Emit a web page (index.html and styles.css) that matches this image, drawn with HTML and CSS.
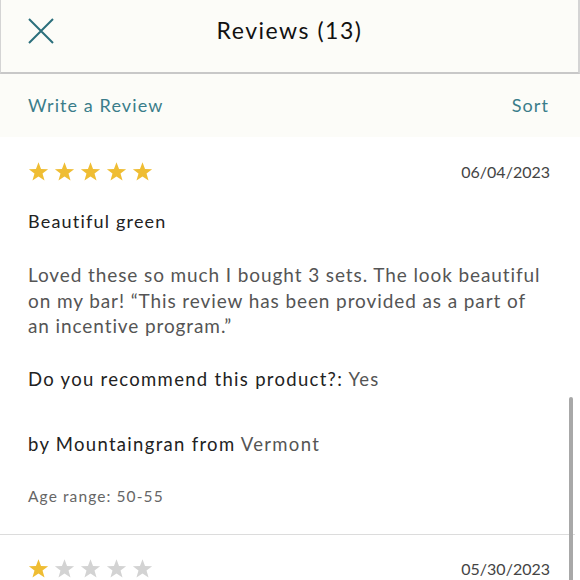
FILE: index.html
```html
<!DOCTYPE html>
<html lang="en">
<head>
  <meta charset="UTF-8">
  <title>Reviews (13)</title>
  <meta name="viewport" content="width=device-width, initial-scale=1">
  <link rel="stylesheet" href="styles.css">
</head>
<body>
  <div class="sheet">
    <header class="top-bar">
      <button class="close-btn" aria-label="Close">
        <svg width="26" height="26" viewBox="0 0 26 26"><path d="M1 1 L25 25 M25 1 L1 25" stroke="#2b6f7c" stroke-width="2" fill="none"/></svg>
      </button>
      <h1>Reviews (13)</h1>
    </header>

    <div class="toolbar">
      <a href="#" class="link">Write a Review</a>
      <a href="#" class="link">Sort</a>
    </div>

    <div class="review">
      <div class="review-top">
        <div class="stars">
          <svg viewBox="0 0 24 24"><polygon class="on" points="12,1.5 14.9,9.2 23,9.4 16.6,14.4 18.9,22.3 12,17.7 5.1,22.3 7.4,14.4 1,9.4 9.1,9.2"/></svg>
          <svg viewBox="0 0 24 24"><polygon class="on" points="12,1.5 14.9,9.2 23,9.4 16.6,14.4 18.9,22.3 12,17.7 5.1,22.3 7.4,14.4 1,9.4 9.1,9.2"/></svg>
          <svg viewBox="0 0 24 24"><polygon class="on" points="12,1.5 14.9,9.2 23,9.4 16.6,14.4 18.9,22.3 12,17.7 5.1,22.3 7.4,14.4 1,9.4 9.1,9.2"/></svg>
          <svg viewBox="0 0 24 24"><polygon class="on" points="12,1.5 14.9,9.2 23,9.4 16.6,14.4 18.9,22.3 12,17.7 5.1,22.3 7.4,14.4 1,9.4 9.1,9.2"/></svg>
          <svg viewBox="0 0 24 24"><polygon class="on" points="12,1.5 14.9,9.2 23,9.4 16.6,14.4 18.9,22.3 12,17.7 5.1,22.3 7.4,14.4 1,9.4 9.1,9.2"/></svg>
        </div>
        <span class="date">06/04/2023</span>
      </div>
      <h2 class="review-title">Beautiful green</h2>
      <p class="review-body">Loved these so much I bought 3 sets. The look beautiful on my bar! “This review has been provided as a part of an incentive program.”</p>
      <p class="recommend">Do you recommend this product?: <span class="light">Yes</span></p>
      <p class="author">by Mountaingran from <span class="light">Vermont</span></p>
      <p class="age">Age range: 50-55</p>
    </div>

    <div class="review">
      <div class="review-top">
        <div class="stars">
          <svg viewBox="0 0 24 24"><polygon class="on" points="12,1.5 14.9,9.2 23,9.4 16.6,14.4 18.9,22.3 12,17.7 5.1,22.3 7.4,14.4 1,9.4 9.1,9.2"/></svg>
          <svg viewBox="0 0 24 24"><polygon points="12,1.5 14.9,9.2 23,9.4 16.6,14.4 18.9,22.3 12,17.7 5.1,22.3 7.4,14.4 1,9.4 9.1,9.2"/></svg>
          <svg viewBox="0 0 24 24"><polygon points="12,1.5 14.9,9.2 23,9.4 16.6,14.4 18.9,22.3 12,17.7 5.1,22.3 7.4,14.4 1,9.4 9.1,9.2"/></svg>
          <svg viewBox="0 0 24 24"><polygon points="12,1.5 14.9,9.2 23,9.4 16.6,14.4 18.9,22.3 12,17.7 5.1,22.3 7.4,14.4 1,9.4 9.1,9.2"/></svg>
          <svg viewBox="0 0 24 24"><polygon points="12,1.5 14.9,9.2 23,9.4 16.6,14.4 18.9,22.3 12,17.7 5.1,22.3 7.4,14.4 1,9.4 9.1,9.2"/></svg>
        </div>
        <span class="date">05/30/2023</span>
      </div>
    </div>

    <div class="scrollbar"></div>
  </div>
</body>
</html>
```

FILE: styles.css
```css
body {
  margin: 0;
  font-family: Lato, "Noto Sans", sans-serif;
  background: #fff;
  color: #333;
}

.sheet {
  position: relative;
  height: 580px;
  overflow: hidden;
}

.top-bar {
  height: 74px;
  box-sizing: border-box;
  padding-top: 15px;
  background: #fcfcf8;
  border-left: 1px solid #d4d4d4;
  border-right: 2px solid #d4d4d4;
  border-bottom: 2px solid #c8c8c8;
  display: flex;
  align-items: flex-start;
  justify-content: center;
  position: relative;
}

.top-bar h1 {
  margin: 0;
  font-size: 23px;
  line-height: 30px;
  font-weight: 400;
  letter-spacing: 1.5px;
  color: #111;
}

.close-btn {
  position: absolute;
  left: 27px;
  top: 18px;
  background: none;
  border: none;
  padding: 0;
  width: 26px;
  height: 26px;
}

.close-btn svg {
  display: block;
}

.toolbar {
  height: 63px;
  background: #fcfcf8;
  display: flex;
  align-items: center;
  justify-content: space-between;
  padding: 0 31px 0 28px;
}

.link {
  color: #3a7d8a;
  text-decoration: none;
  font-size: 18px;
  letter-spacing: 1.1px;
  padding-bottom: 2px;
}

.review {
  padding: 24px 25px 28px 28px;
  border-bottom: 1px solid #dcdcdc;
  margin-right: 5px;
}

.review-top {
  display: flex;
  justify-content: space-between;
  align-items: center;
  height: 20px;
}

.stars {
  display: flex;
  gap: 5px;
}

.stars svg {
  width: 21px;
  height: 21px;
  display: block;
}

.stars polygon {
  fill: #d3d3d3;
}

.stars polygon.on {
  fill: #efbd33;
}

.date {
  font-size: 16px;
  color: #444;
  letter-spacing: 0;
}

.review-title {
  margin: 28px 0 0;
  font-size: 18px;
  line-height: 24px;
  font-weight: 400;
  color: #222;
  letter-spacing: 1.2px;
}

.review-body {
  margin: 29px 0 0;
  font-size: 19px;
  line-height: 25.5px;
  color: #555;
  letter-spacing: 0.9px;
  padding-right: 6px;
}

.recommend,
.author {
  font-size: 18.5px;
  line-height: 24px;
  font-weight: 400;
  color: #222;
  letter-spacing: 1.3px;
}

.recommend {
  margin: 28px 0 0;
}

.author {
  margin: 41px 0 0;
}

.light {
  color: #555;
}

.age {
  margin: 30px 0 0;
  font-size: 15.5px;
  line-height: 20px;
  color: #666;
  letter-spacing: 1.1px;
}

.scrollbar {
  position: absolute;
  left: 569px;
  top: 397px;
  width: 4px;
  height: 200px;
  border-radius: 2px;
  background: #a8a8a8;
}
```
